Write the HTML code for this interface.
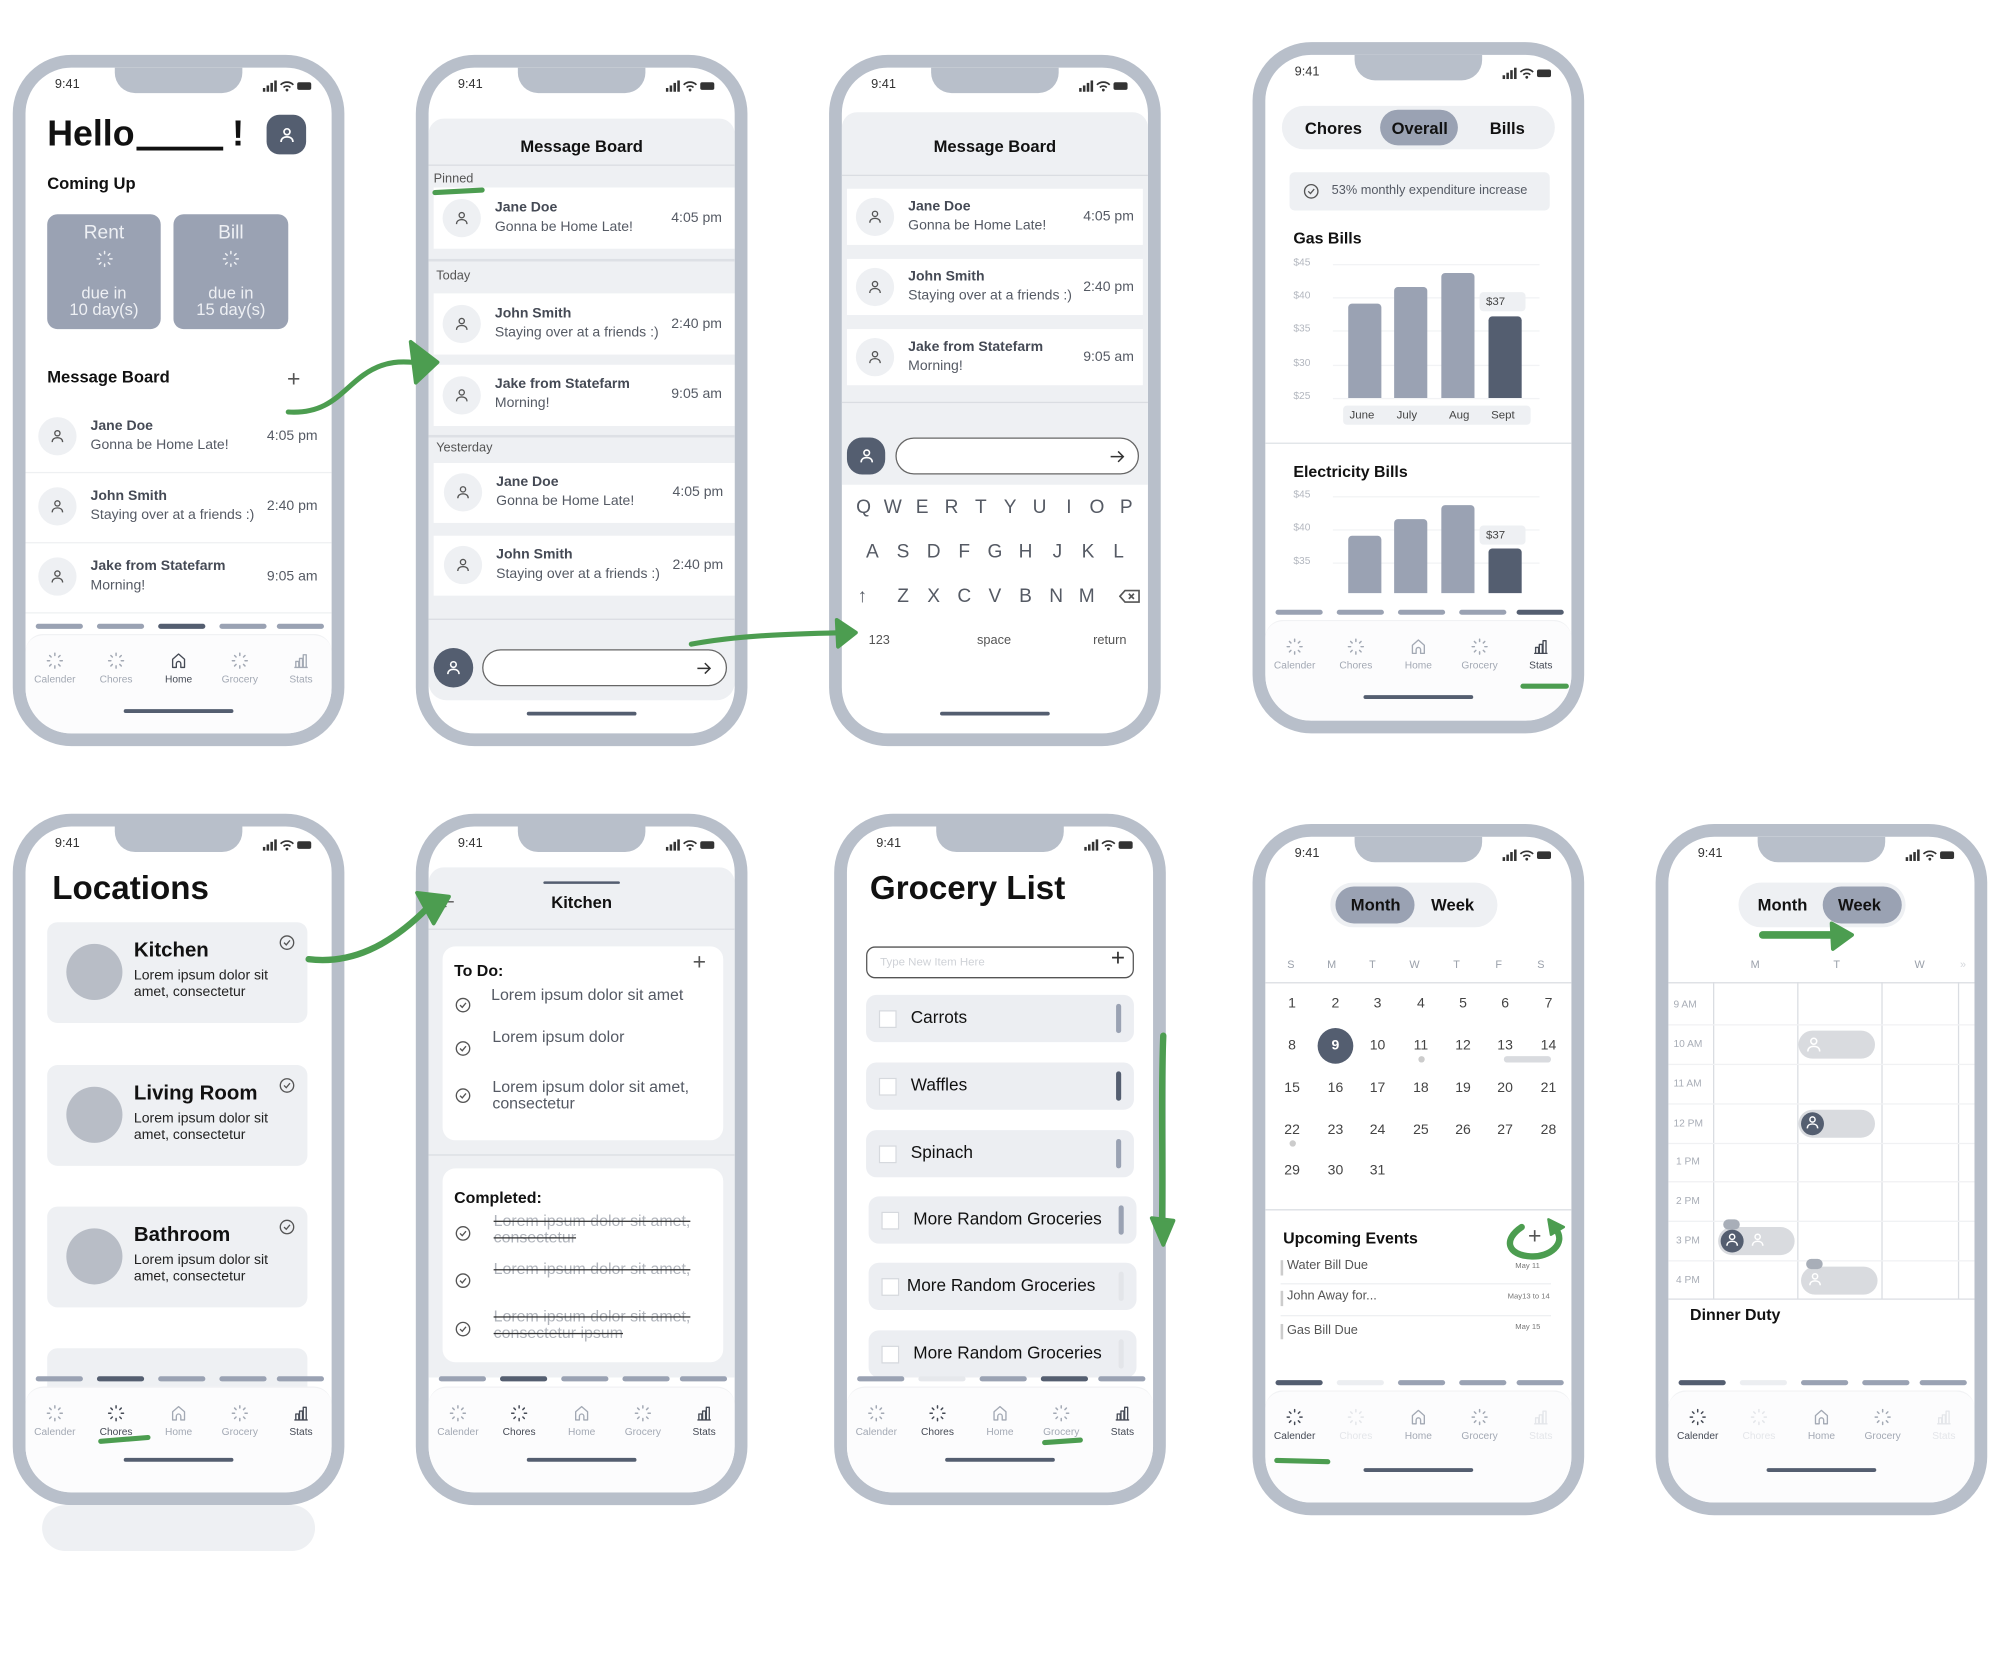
<!DOCTYPE html>
<html><head><meta charset="utf-8"><style>
html,body{margin:0;padding:0;width:2000px;height:1667px;overflow:hidden;background:#fff;font-family:"Liberation Sans",Arial,sans-serif;}
#w{position:absolute;left:0;top:0;width:1568px;height:1307px;transform:scale(1.27551);transform-origin:0 0;}
.ph{position:absolute;width:240px;height:522px;border:10px solid #b8bfca;border-radius:46px;background:#fff;overflow:hidden;}
.a{position:absolute;}
.notch{position:absolute;left:70px;top:0;width:100px;height:20px;background:#b8bfca;border-radius:0 0 16px 16px;z-index:5;}
.tm{position:absolute;left:23px;top:8px;font-size:10px;color:#333;}
.sb{position:absolute;left:186px;top:10px;}
.nav{position:absolute;left:0;width:240px;height:90px;}
.bar{position:absolute;top:0;width:37px;height:4px;border-radius:2px;background:#9aa2b3;}
.navbg{position:absolute;left:0;top:8px;width:240px;height:90px;background:#fcfcfd;border-top:1px solid #f1f2f4;border-radius:14px 14px 0 0;}
.tab{position:absolute;top:22px;width:48px;margin-left:-24px;text-align:center;font-size:8px;color:#a3a9b4;}
.tab svg{display:block;margin:0 auto 3px;}
.ind{position:absolute;left:77px;top:67px;width:86px;height:3px;border-radius:2px;background:#545e70;}
.av{position:absolute;width:30px;height:30px;border-radius:50%;background:#eef0f3;display:flex;align-items:center;justify-content:center;color:#555;}
.nm{position:absolute;font-size:11px;font-weight:bold;color:#454a55;white-space:nowrap;}
.sub{position:absolute;font-size:11px;color:#555a64;white-space:nowrap;}
.tt{position:absolute;font-size:11px;color:#555a64;white-space:nowrap;}
.card{position:absolute;background:#fff;}
.k{position:absolute;width:18px;margin-left:-9px;text-align:center;font-size:15px;color:#555a64;}
.yl{position:absolute;left:22px;font-size:8px;color:#b3b7bf;}
.gl{position:absolute;left:53px;width:162px;height:1px;background:#f2f3f5;}
.br{position:absolute;width:26px;background:#9aa2b3;border-radius:3px 3px 0 0;}
.dt{position:absolute;width:24px;margin-left:-12px;text-align:center;font-size:11px;color:#444;}
.wd{position:absolute;width:20px;margin-left:-10px;text-align:center;font-size:8.5px;color:#9aa0aa;}
.gi{position:absolute;left:15px;width:210px;height:37px;background:#eceef2;border-radius:8px;}
.gi .cb{position:absolute;left:10px;top:12px;width:12px;height:12px;background:#fff;border:1px solid #d6d9de;}
.gi .tx{position:absolute;left:35px;top:10px;font-size:13.5px;color:#111;white-space:nowrap;}
.gi .hd{position:absolute;right:10px;top:7px;width:4px;height:23px;border-radius:2px;background:#9aa2b3;}
.lc{position:absolute;left:17px;width:204px;height:79px;background:#eef0f3;border-radius:8px;}
.lc .c{position:absolute;left:15px;top:17px;width:44px;height:44px;border-radius:50%;background:#b8bdc6;}
.lc .h{position:absolute;left:68px;top:14px;font-size:16px;font-weight:bold;color:#111;}
.lc .p{position:absolute;left:68px;top:36px;font-size:11px;line-height:13px;color:#222;}
.lc .ck{position:absolute;left:181px;top:9px;}
.it{position:absolute;left:49px;font-size:12.5px;line-height:13px;color:#555a64;white-space:nowrap;}
.st{position:absolute;left:51px;font-size:12.5px;line-height:13px;color:#b0b4bb;text-decoration:line-through;text-decoration-color:#333;white-space:nowrap;}
.ic{position:absolute;left:20px;}
.seg{position:absolute;background:#eef0f3;border-radius:18px;}
.pill{position:absolute;background:#9aa2b3;border-radius:16px;}
.sl{position:absolute;font-size:13px;font-weight:bold;color:#111;}
.tl{position:absolute;left:4px;font-size:8px;color:#a8adb6;}
.ev{position:absolute;border-radius:11px;background:#d9dbdf;height:22px;width:60px;}
</style></head><body><div id="w">

<!-- ============ P1 ============ -->
<div class="ph" style="left:10px;top:43px;">
 <div class="notch"></div><div class="tm">9:41</div>
 <svg class="sb" width="40" height="9" viewBox="0 0 40 9" fill="#333"><rect x="0" y="6" width="2" height="3"/><rect x="3" y="4" width="2" height="5"/><rect x="6" y="2" width="2" height="7"/><rect x="9" y="0" width="2" height="9"/><path d="M14 3.5a7 7 0 0 1 10 0M16.3 5.6a3.8 3.8 0 0 1 5.4 0" stroke="#333" fill="none" stroke-width="1.3"/><circle cx="19" cy="7.6" r="1.1"/><rect x="27" y="1.5" width="11" height="6" rx="1.5"/></svg>
 <div class="a" style="left:17px;top:36px;font-size:28px;font-weight:bold;color:#111;">Hello</div>
 <div class="a" style="left:87px;top:62px;width:68px;height:3px;background:#111;"></div>
 <div class="a" style="left:162px;top:36px;font-size:28px;font-weight:bold;color:#111;">!</div>
 <div class="a" style="left:189px;top:37px;width:31px;height:31px;border-radius:10px;background:#545e70;display:flex;align-items:center;justify-content:center;"><svg width="16" height="16" viewBox="0 0 24 24" fill="none" stroke="#fff" stroke-width="2"><circle cx="12" cy="8" r="3.5"/><path d="M5 20c0-4 3-6 7-6s7 2 7 6"/></svg></div>
 <div class="a" style="left:17px;top:83px;font-size:13px;font-weight:bold;color:#111;">Coming Up</div>
 <div class="a" style="left:17px;top:115px;width:89px;height:90px;background:#9aa2b3;border-radius:8px;color:#eef0f4;text-align:center;">
  <div style="font-size:15px;margin-top:6px;">Rent</div>
  <svg width="14" height="14" viewBox="0 0 24 24" fill="none" stroke="#eef0f4" stroke-width="2" stroke-linecap="round" style="margin-top:5px"><path d="M12 2v3M12 19v3M2 12h3M19 12h3M5 5l2 2M17 17l2 2M5 19l2-2M17 7l2-2"/></svg>
  <div style="font-size:13px;line-height:13px;margin-top:8px;">due in<br>10 day(s)</div></div>
 <div class="a" style="left:116px;top:115px;width:90px;height:90px;background:#9aa2b3;border-radius:8px;color:#eef0f4;text-align:center;">
  <div style="font-size:15px;margin-top:6px;">Bill</div>
  <svg width="14" height="14" viewBox="0 0 24 24" fill="none" stroke="#eef0f4" stroke-width="2" stroke-linecap="round" style="margin-top:5px"><path d="M12 2v3M12 19v3M2 12h3M19 12h3M5 5l2 2M17 17l2 2M5 19l2-2M17 7l2-2"/></svg>
  <div style="font-size:13px;line-height:13px;margin-top:8px;">due in<br>15 day(s)</div></div>
 <div class="a" style="left:17px;top:235px;font-size:13px;font-weight:bold;color:#111;">Message Board</div>
 <div class="a" style="left:205px;top:236px;font-size:18px;color:#555;line-height:16px;">+</div>
 <div class="av" style="left:10px;top:274px;"><svg width="14" height="14" viewBox="0 0 24 24" fill="none" stroke="#555" stroke-width="1.8"><circle cx="12" cy="8" r="3.5"/><path d="M5 20c0-4 3-6 7-6s7 2 7 6"/></svg></div>
 <div class="nm" style="left:51px;top:275px;">Jane Doe</div><div class="sub" style="left:51px;top:290px;">Gonna be Home Late!</div><div class="tt" style="right:11px;top:283px;">4:05 pm</div>
 <div class="a" style="left:0;top:317px;width:240px;height:1px;background:#eef0f2;"></div>
 <div class="av" style="left:10px;top:329px;"><svg width="14" height="14" viewBox="0 0 24 24" fill="none" stroke="#555" stroke-width="1.8"><circle cx="12" cy="8" r="3.5"/><path d="M5 20c0-4 3-6 7-6s7 2 7 6"/></svg></div>
 <div class="nm" style="left:51px;top:330px;">John Smith</div><div class="sub" style="left:51px;top:345px;">Staying over at a friends :)</div><div class="tt" style="right:11px;top:338px;">2:40 pm</div>
 <div class="a" style="left:0;top:372px;width:240px;height:1px;background:#eef0f2;"></div>
 <div class="av" style="left:10px;top:384px;"><svg width="14" height="14" viewBox="0 0 24 24" fill="none" stroke="#555" stroke-width="1.8"><circle cx="12" cy="8" r="3.5"/><path d="M5 20c0-4 3-6 7-6s7 2 7 6"/></svg></div>
 <div class="nm" style="left:51px;top:385px;">Jake from Statefarm</div><div class="sub" style="left:51px;top:400px;">Morning!</div><div class="tt" style="right:11px;top:393px;">9:05 am</div>
 <div class="a" style="left:0;top:427px;width:240px;height:1px;background:#eef0f2;"></div>
 <div class="nav" style="top:436px;">
  <div class="navbg"></div>
  <div class="bar" style="left:8px"></div><div class="bar" style="left:56px"></div><div class="bar" style="left:104px;background:#545e70"></div><div class="bar" style="left:152px"></div><div class="bar" style="left:197px"></div>
  <div class="tab" style="left:23px"><svg width="14" height="14" viewBox="0 0 24 24" fill="none" stroke="currentColor" stroke-width="2" stroke-linecap="round"><path d="M12 2v3M12 19v3M2 12h3M19 12h3M5 5l2 2M17 17l2 2M5 19l2-2M17 7l2-2"/></svg>Calender</div>
  <div class="tab" style="left:71px"><svg width="14" height="14" viewBox="0 0 24 24" fill="none" stroke="currentColor" stroke-width="2" stroke-linecap="round"><path d="M12 2v3M12 19v3M2 12h3M19 12h3M5 5l2 2M17 17l2 2M5 19l2-2M17 7l2-2"/></svg>Chores</div>
  <div class="tab" style="left:120px;color:#454a55"><svg width="14" height="14" viewBox="0 0 24 24" fill="none" stroke="currentColor" stroke-width="1.8" stroke-linejoin="round"><path d="M4 21V10l8-7 8 7v11h-5v-5a3 3 0 0 0-6 0v5z"/></svg>Home</div>
  <div class="tab" style="left:168px"><svg width="14" height="14" viewBox="0 0 24 24" fill="none" stroke="currentColor" stroke-width="2" stroke-linecap="round"><path d="M12 2v3M12 19v3M2 12h3M19 12h3M5 5l2 2M17 17l2 2M5 19l2-2M17 7l2-2"/></svg>Grocery</div>
  <div class="tab" style="left:216px"><svg width="14" height="14" viewBox="0 0 24 24" fill="none" stroke="currentColor" stroke-width="1.8" stroke-linejoin="round"><path d="M3 21h18M5 21v-8h4v8M10 21V9h4v12M15 21V4h4v17"/></svg>Stats</div>
  <div class="ind"></div>
 </div>
</div>

<!-- ============ P2 ============ -->
<div class="ph" style="left:326px;top:43px;">
 <div class="notch"></div><div class="tm">9:41</div>
 <svg class="sb" width="40" height="9" viewBox="0 0 40 9" fill="#333"><rect x="0" y="6" width="2" height="3"/><rect x="3" y="4" width="2" height="5"/><rect x="6" y="2" width="2" height="7"/><rect x="9" y="0" width="2" height="9"/><path d="M14 3.5a7 7 0 0 1 10 0M16.3 5.6a3.8 3.8 0 0 1 5.4 0" stroke="#333" fill="none" stroke-width="1.3"/><circle cx="19" cy="7.6" r="1.1"/><rect x="27" y="1.5" width="11" height="6" rx="1.5"/></svg>
 <div class="a" style="left:0;top:40px;width:240px;height:456px;background:#eef0f3;border-radius:12px 12px 14px 14px;"></div>
 <div class="a" style="left:0;top:54px;width:240px;text-align:center;font-size:13px;font-weight:bold;color:#111;">Message Board</div>
 <div class="a" style="left:0;top:76px;width:240px;height:1px;background:#dadde2;"></div>
 <div class="a" style="left:4px;top:82px;font-size:10px;color:#555;">Pinned</div>
 <div class="card" style="left:4px;top:94px;width:236px;height:48px;"></div>
 <div class="a" style="left:0;top:150px;width:240px;height:2px;background:#dde0e5;"></div>
 <div class="a" style="left:6px;top:158px;font-size:10px;color:#555;">Today</div>
 <div class="card" style="left:4px;top:177px;width:236px;height:48px;"></div>
 <div class="card" style="left:4px;top:233px;width:236px;height:48px;"></div>
 <div class="a" style="left:0;top:288px;width:240px;height:2px;background:#dde0e5;"></div>
 <div class="a" style="left:6px;top:293px;font-size:10px;color:#555;">Yesterday</div>
 <div class="card" style="left:4px;top:310px;width:236px;height:47px;"></div>
 <div class="card" style="left:4px;top:367px;width:236px;height:47px;"></div>
 <div class="a" style="left:0;top:432px;width:240px;height:1px;background:#dadde2;"></div>
 <div class="av" style="left:11px;top:103px;"><svg width="14" height="14" viewBox="0 0 24 24" fill="none" stroke="#555" stroke-width="1.8"><circle cx="12" cy="8" r="3.5"/><path d="M5 20c0-4 3-6 7-6s7 2 7 6"/></svg></div>
 <div class="nm" style="left:52px;top:104px;">Jane Doe</div><div class="sub" style="left:52px;top:119px;">Gonna be Home Late!</div><div class="tt" style="right:10px;top:112px;">4:05 pm</div>
 <div class="av" style="left:11px;top:186px;"><svg width="14" height="14" viewBox="0 0 24 24" fill="none" stroke="#555" stroke-width="1.8"><circle cx="12" cy="8" r="3.5"/><path d="M5 20c0-4 3-6 7-6s7 2 7 6"/></svg></div>
 <div class="nm" style="left:52px;top:187px;">John Smith</div><div class="sub" style="left:52px;top:202px;">Staying over at a friends :)</div><div class="tt" style="right:10px;top:195px;">2:40 pm</div>
 <div class="av" style="left:11px;top:242px;"><svg width="14" height="14" viewBox="0 0 24 24" fill="none" stroke="#555" stroke-width="1.8"><circle cx="12" cy="8" r="3.5"/><path d="M5 20c0-4 3-6 7-6s7 2 7 6"/></svg></div>
 <div class="nm" style="left:52px;top:242px;">Jake from Statefarm</div><div class="sub" style="left:52px;top:257px;">Morning!</div><div class="tt" style="right:10px;top:250px;">9:05 am</div>
 <div class="av" style="left:12px;top:318px;"><svg width="14" height="14" viewBox="0 0 24 24" fill="none" stroke="#555" stroke-width="1.8"><circle cx="12" cy="8" r="3.5"/><path d="M5 20c0-4 3-6 7-6s7 2 7 6"/></svg></div>
 <div class="nm" style="left:53px;top:319px;">Jane Doe</div><div class="sub" style="left:53px;top:334px;">Gonna be Home Late!</div><div class="tt" style="right:9px;top:327px;">4:05 pm</div>
 <div class="av" style="left:12px;top:375px;"><svg width="14" height="14" viewBox="0 0 24 24" fill="none" stroke="#555" stroke-width="1.8"><circle cx="12" cy="8" r="3.5"/><path d="M5 20c0-4 3-6 7-6s7 2 7 6"/></svg></div>
 <div class="nm" style="left:53px;top:376px;">John Smith</div><div class="sub" style="left:53px;top:391px;">Staying over at a friends :)</div><div class="tt" style="right:9px;top:384px;">2:40 pm</div>
 <div class="a" style="left:4px;top:455px;width:31px;height:31px;border-radius:50%;background:#545e70;display:flex;align-items:center;justify-content:center;"><svg width="15" height="15" viewBox="0 0 24 24" fill="none" stroke="#fff" stroke-width="2"><circle cx="12" cy="8" r="3.5"/><path d="M5 20c0-4 3-6 7-6s7 2 7 6"/></svg></div>
 <div class="a" style="left:42px;top:456px;width:190px;height:27px;border:1px solid #666;border-radius:15px;background:#fff;"><svg class="a" style="right:10px;top:7px" width="14" height="14" viewBox="0 0 24 24" fill="none" stroke="#333" stroke-width="2"><path d="M3 12h17M13 5l7 7-7 7"/></svg></div>
 <div class="a" style="left:77px;top:505px;width:86px;height:3px;border-radius:2px;background:#545e70;"></div>
</div>

<!-- ============ P3 ============ -->
<div class="ph" style="left:650px;top:43px;">
 <div class="notch"></div><div class="tm">9:41</div>
 <svg class="sb" width="40" height="9" viewBox="0 0 40 9" fill="#333"><rect x="0" y="6" width="2" height="3"/><rect x="3" y="4" width="2" height="5"/><rect x="6" y="2" width="2" height="7"/><rect x="9" y="0" width="2" height="9"/><path d="M14 3.5a7 7 0 0 1 10 0M16.3 5.6a3.8 3.8 0 0 1 5.4 0" stroke="#333" fill="none" stroke-width="1.3"/><circle cx="19" cy="7.6" r="1.1"/><rect x="27" y="1.5" width="11" height="6" rx="1.5"/></svg>
 <div class="a" style="left:0;top:35px;width:240px;height:292px;background:#eef0f3;border-radius:12px 12px 0 0;"></div>
 <div class="a" style="left:0;top:54px;width:240px;text-align:center;font-size:13px;font-weight:bold;color:#111;">Message Board</div>
 <div class="a" style="left:0;top:84px;width:240px;height:1px;background:#dadde2;"></div>
 <div class="card" style="left:4px;top:95px;width:232px;height:44px;"></div>
 <div class="card" style="left:4px;top:150px;width:232px;height:44px;"></div>
 <div class="card" style="left:4px;top:205px;width:232px;height:44px;"></div>
 <div class="a" style="left:0;top:262px;width:240px;height:1px;background:#dadde2;"></div>
 <div class="av" style="left:11px;top:102px;"><svg width="14" height="14" viewBox="0 0 24 24" fill="none" stroke="#555" stroke-width="1.8"><circle cx="12" cy="8" r="3.5"/><path d="M5 20c0-4 3-6 7-6s7 2 7 6"/></svg></div>
 <div class="nm" style="left:52px;top:103px;">Jane Doe</div><div class="sub" style="left:52px;top:118px;">Gonna be Home Late!</div><div class="tt" style="right:11px;top:111px;">4:05 pm</div>
 <div class="av" style="left:11px;top:157px;"><svg width="14" height="14" viewBox="0 0 24 24" fill="none" stroke="#555" stroke-width="1.8"><circle cx="12" cy="8" r="3.5"/><path d="M5 20c0-4 3-6 7-6s7 2 7 6"/></svg></div>
 <div class="nm" style="left:52px;top:158px;">John Smith</div><div class="sub" style="left:52px;top:173px;">Staying over at a friends :)</div><div class="tt" style="right:11px;top:166px;">2:40 pm</div>
 <div class="av" style="left:11px;top:212px;"><svg width="14" height="14" viewBox="0 0 24 24" fill="none" stroke="#555" stroke-width="1.8"><circle cx="12" cy="8" r="3.5"/><path d="M5 20c0-4 3-6 7-6s7 2 7 6"/></svg></div>
 <div class="nm" style="left:52px;top:213px;">Jake from Statefarm</div><div class="sub" style="left:52px;top:228px;">Morning!</div><div class="tt" style="right:11px;top:221px;">9:05 am</div>
 <div class="a" style="left:4px;top:290px;width:30px;height:29px;border-radius:12px;background:#545e70;display:flex;align-items:center;justify-content:center;"><svg width="15" height="15" viewBox="0 0 24 24" fill="none" stroke="#fff" stroke-width="2"><circle cx="12" cy="8" r="3.5"/><path d="M5 20c0-4 3-6 7-6s7 2 7 6"/></svg></div>
 <div class="a" style="left:42px;top:290px;width:189px;height:27px;border:1px solid #666;border-radius:15px;background:#fff;"><svg class="a" style="right:9px;top:7px" width="14" height="14" viewBox="0 0 24 24" fill="none" stroke="#333" stroke-width="2"><path d="M3 12h17M13 5l7 7-7 7"/></svg></div>
 <div class="k" style="left:17px;top:336px">Q</div><div class="k" style="left:40px;top:336px">W</div><div class="k" style="left:63px;top:336px">E</div><div class="k" style="left:86px;top:336px">R</div><div class="k" style="left:109px;top:336px">T</div><div class="k" style="left:132px;top:336px">Y</div><div class="k" style="left:155px;top:336px">U</div><div class="k" style="left:178px;top:336px">I</div><div class="k" style="left:200px;top:336px">O</div><div class="k" style="left:223px;top:336px">P</div>
 <div class="k" style="left:24px;top:371px">A</div><div class="k" style="left:48px;top:371px">S</div><div class="k" style="left:72px;top:371px">D</div><div class="k" style="left:96px;top:371px">F</div><div class="k" style="left:120px;top:371px">G</div><div class="k" style="left:144px;top:371px">H</div><div class="k" style="left:169px;top:371px">J</div><div class="k" style="left:193px;top:371px">K</div><div class="k" style="left:217px;top:371px">L</div>
 <div class="k" style="left:16px;top:406px">↑</div><div class="k" style="left:48px;top:406px">Z</div><div class="k" style="left:72px;top:406px">X</div><div class="k" style="left:96px;top:406px">C</div><div class="k" style="left:120px;top:406px">V</div><div class="k" style="left:144px;top:406px">B</div><div class="k" style="left:168px;top:406px">N</div><div class="k" style="left:192px;top:406px">M</div>
 <svg class="a" style="left:217px;top:409px" width="17" height="11" viewBox="0 0 17 11" fill="none" stroke="#555" stroke-width="1.3"><path d="M5 1h11v9H5L1 5.5z M8 3.5l4 4M12 3.5l-4 4"/></svg>
 <div class="a" style="left:21px;top:444px;font-size:10px;color:#555;">123</div>
 <div class="a" style="left:106px;top:444px;font-size:10px;color:#555;">space</div>
 <div class="a" style="left:197px;top:444px;font-size:10px;color:#555;">return</div>
 <div class="a" style="left:77px;top:505px;width:86px;height:3px;border-radius:2px;background:#545e70;"></div>
</div>

<!-- ============ P4 ============ -->
<div class="ph" style="left:982px;top:33px;">
 <div class="notch"></div><div class="tm">9:41</div>
 <svg class="sb" width="40" height="9" viewBox="0 0 40 9" fill="#333"><rect x="0" y="6" width="2" height="3"/><rect x="3" y="4" width="2" height="5"/><rect x="6" y="2" width="2" height="7"/><rect x="9" y="0" width="2" height="9"/><path d="M14 3.5a7 7 0 0 1 10 0M16.3 5.6a3.8 3.8 0 0 1 5.4 0" stroke="#333" fill="none" stroke-width="1.3"/><circle cx="19" cy="7.6" r="1.1"/><rect x="27" y="1.5" width="11" height="6" rx="1.5"/></svg>
 <div class="seg" style="left:13px;top:40px;width:214px;height:34px;"></div>
 <div class="pill" style="left:90px;top:43px;width:61px;height:28px;"></div>
 <div class="sl" style="left:31px;top:50px;">Chores</div>
 <div class="sl" style="left:99px;top:50px;">Overall</div>
 <div class="sl" style="left:176px;top:50px;">Bills</div>
 <div class="a" style="left:19px;top:92px;width:204px;height:30px;background:#eef0f3;border-radius:4px;"></div>
 <svg class="a" style="left:29px;top:100px" width="14" height="14" viewBox="0 0 24 24" fill="none" stroke="#555" stroke-width="1.8"><circle cx="12" cy="12" r="9"/><path d="M8 12l3 3 5-6"/></svg>
 <div class="a" style="left:52px;top:101px;font-size:10px;color:#555a64;">53% monthly expenditure increase</div>
 <div class="a" style="left:22px;top:137px;font-size:12.5px;font-weight:bold;color:#111;">Gas Bills</div>
 <div class="yl" style="top:158px">$45</div><div class="yl" style="top:184px">$40</div><div class="yl" style="top:210px">$35</div><div class="yl" style="top:237px">$30</div><div class="yl" style="top:263px">$25</div>
 <div class="gl" style="top:164px"></div><div class="gl" style="top:190px"></div><div class="gl" style="top:216px"></div><div class="gl" style="top:243px"></div><div class="gl" style="top:269px"></div>
 <div class="br" style="left:65px;top:195px;height:74px"></div><div class="br" style="left:101px;top:182px;height:87px"></div><div class="br" style="left:138px;top:171px;height:98px"></div><div class="br" style="left:175px;top:205px;height:64px;background:#545e70"></div>
 <div class="a" style="left:168px;top:186px;width:36px;height:15px;background:#eef0f3;border-radius:3px;font-size:9px;color:#444;line-height:15px;padding-left:5px;box-sizing:border-box;">$37</div>
 <div class="a" style="left:61px;top:275px;width:147px;height:15px;background:#eef0f3;border-radius:3px;"></div>
 <div class="a" style="left:66px;top:277px;font-size:9px;color:#444;">June</div><div class="a" style="left:103px;top:277px;font-size:9px;color:#444;">July</div><div class="a" style="left:144px;top:277px;font-size:9px;color:#444;">Aug</div><div class="a" style="left:177px;top:277px;font-size:9px;color:#444;">Sept</div>
 <div class="a" style="left:0;top:304px;width:240px;height:1px;background:#dfe2e6;"></div>
 <div class="a" style="left:22px;top:320px;font-size:12.5px;font-weight:bold;color:#111;">Electricity Bills</div>
 <div class="yl" style="top:340px">$45</div><div class="yl" style="top:366px">$40</div><div class="yl" style="top:392px">$35</div>
 <div class="gl" style="top:346px"></div><div class="gl" style="top:372px"></div><div class="gl" style="top:398px"></div>
 <div class="br" style="left:65px;top:377px;height:45px"></div><div class="br" style="left:101px;top:364px;height:58px"></div><div class="br" style="left:138px;top:353px;height:69px"></div><div class="br" style="left:175px;top:387px;height:35px;background:#545e70"></div>
 <div class="a" style="left:168px;top:369px;width:36px;height:15px;background:#eef0f3;border-radius:3px;font-size:9px;color:#444;line-height:15px;padding-left:5px;box-sizing:border-box;">$37</div>
 <div class="nav" style="top:435px;">
  <div class="navbg"></div>
  <div class="bar" style="left:8px"></div><div class="bar" style="left:56px"></div><div class="bar" style="left:104px"></div><div class="bar" style="left:152px"></div><div class="bar" style="left:197px;background:#545e70"></div>
  <div class="tab" style="left:23px"><svg width="14" height="14" viewBox="0 0 24 24" fill="none" stroke="currentColor" stroke-width="2" stroke-linecap="round"><path d="M12 2v3M12 19v3M2 12h3M19 12h3M5 5l2 2M17 17l2 2M5 19l2-2M17 7l2-2"/></svg>Calender</div>
  <div class="tab" style="left:71px"><svg width="14" height="14" viewBox="0 0 24 24" fill="none" stroke="currentColor" stroke-width="2" stroke-linecap="round"><path d="M12 2v3M12 19v3M2 12h3M19 12h3M5 5l2 2M17 17l2 2M5 19l2-2M17 7l2-2"/></svg>Chores</div>
  <div class="tab" style="left:120px"><svg width="14" height="14" viewBox="0 0 24 24" fill="none" stroke="currentColor" stroke-width="1.8" stroke-linejoin="round"><path d="M4 21V10l8-7 8 7v11h-5v-5a3 3 0 0 0-6 0v5z"/></svg>Home</div>
  <div class="tab" style="left:168px"><svg width="14" height="14" viewBox="0 0 24 24" fill="none" stroke="currentColor" stroke-width="2" stroke-linecap="round"><path d="M12 2v3M12 19v3M2 12h3M19 12h3M5 5l2 2M17 17l2 2M5 19l2-2M17 7l2-2"/></svg>Grocery</div>
  <div class="tab" style="left:216px;color:#454a55"><svg width="14" height="14" viewBox="0 0 24 24" fill="none" stroke="currentColor" stroke-width="1.8" stroke-linejoin="round"><path d="M3 21h18M5 21v-8h4v8M10 21V9h4v12M15 21V4h4v17"/></svg>Stats</div>
  <div class="ind"></div>
 </div>
</div>

<!-- ============ P5 ============ -->
<div class="ph" style="left:10px;top:638px;">
 <div class="notch"></div><div class="tm">9:41</div>
 <svg class="sb" width="40" height="9" viewBox="0 0 40 9" fill="#333"><rect x="0" y="6" width="2" height="3"/><rect x="3" y="4" width="2" height="5"/><rect x="6" y="2" width="2" height="7"/><rect x="9" y="0" width="2" height="9"/><path d="M14 3.5a7 7 0 0 1 10 0M16.3 5.6a3.8 3.8 0 0 1 5.4 0" stroke="#333" fill="none" stroke-width="1.3"/><circle cx="19" cy="7.6" r="1.1"/><rect x="27" y="1.5" width="11" height="6" rx="1.5"/></svg>
 <div class="a" style="left:21px;top:33px;font-size:26px;font-weight:bold;color:#111;">Locations</div>
 <div class="lc" style="top:75px"><div class="c"></div><div class="h">Kitchen</div><div class="p">Lorem ipsum dolor sit<br>amet, consectetur</div><svg class="ck" width="14" height="14" viewBox="0 0 24 24" fill="none" stroke="#555" stroke-width="1.8"><circle cx="12" cy="12" r="9"/><path d="M8 12l3 3 5-6"/></svg></div>
 <div class="lc" style="top:187px"><div class="c"></div><div class="h">Living Room</div><div class="p">Lorem ipsum dolor sit<br>amet, consectetur</div><svg class="ck" width="14" height="14" viewBox="0 0 24 24" fill="none" stroke="#555" stroke-width="1.8"><circle cx="12" cy="12" r="9"/><path d="M8 12l3 3 5-6"/></svg></div>
 <div class="lc" style="top:298px"><div class="c"></div><div class="h">Bathroom</div><div class="p">Lorem ipsum dolor sit<br>amet, consectetur</div><svg class="ck" width="14" height="14" viewBox="0 0 24 24" fill="none" stroke="#555" stroke-width="1.8"><circle cx="12" cy="12" r="9"/><path d="M8 12l3 3 5-6"/></svg></div>
 <div class="lc" style="top:409px"></div>
 <div class="nav" style="top:431px;">
  <div class="navbg"></div>
  <div class="bar" style="left:8px"></div><div class="bar" style="left:56px;background:#545e70"></div><div class="bar" style="left:104px"></div><div class="bar" style="left:152px"></div><div class="bar" style="left:197px"></div>
  <div class="tab" style="left:23px"><svg width="14" height="14" viewBox="0 0 24 24" fill="none" stroke="currentColor" stroke-width="2" stroke-linecap="round"><path d="M12 2v3M12 19v3M2 12h3M19 12h3M5 5l2 2M17 17l2 2M5 19l2-2M17 7l2-2"/></svg>Calender</div>
  <div class="tab" style="left:71px;color:#454a55"><svg width="14" height="14" viewBox="0 0 24 24" fill="none" stroke="currentColor" stroke-width="2" stroke-linecap="round"><path d="M12 2v3M12 19v3M2 12h3M19 12h3M5 5l2 2M17 17l2 2M5 19l2-2M17 7l2-2"/></svg>Chores</div>
  <div class="tab" style="left:120px"><svg width="14" height="14" viewBox="0 0 24 24" fill="none" stroke="currentColor" stroke-width="1.8" stroke-linejoin="round"><path d="M4 21V10l8-7 8 7v11h-5v-5a3 3 0 0 0-6 0v5z"/></svg>Home</div>
  <div class="tab" style="left:168px"><svg width="14" height="14" viewBox="0 0 24 24" fill="none" stroke="currentColor" stroke-width="2" stroke-linecap="round"><path d="M12 2v3M12 19v3M2 12h3M19 12h3M5 5l2 2M17 17l2 2M5 19l2-2M17 7l2-2"/></svg>Grocery</div>
  <div class="tab" style="left:216px;color:#454a55"><svg width="14" height="14" viewBox="0 0 24 24" fill="none" stroke="currentColor" stroke-width="1.8" stroke-linejoin="round"><path d="M3 21h18M5 21v-8h4v8M10 21V9h4v12M15 21V4h4v17"/></svg>Stats</div>
  <div class="ind" style="top:64px"></div>
 </div>
</div>
<div class="a" style="left:33px;top:1180px;width:214px;height:36px;border-radius:18px;background:#eef0f3;"></div>

<!-- ============ P6 ============ -->
<div class="ph" style="left:326px;top:638px;">
 <div class="notch"></div><div class="tm">9:41</div>
 <svg class="sb" width="40" height="9" viewBox="0 0 40 9" fill="#333"><rect x="0" y="6" width="2" height="3"/><rect x="3" y="4" width="2" height="5"/><rect x="6" y="2" width="2" height="7"/><rect x="9" y="0" width="2" height="9"/><path d="M14 3.5a7 7 0 0 1 10 0M16.3 5.6a3.8 3.8 0 0 1 5.4 0" stroke="#333" fill="none" stroke-width="1.3"/><circle cx="19" cy="7.6" r="1.1"/><rect x="27" y="1.5" width="11" height="6" rx="1.5"/></svg>
 <div class="a" style="left:0;top:32px;width:240px;height:400px;background:#eef0f3;border-radius:12px 12px 0 0;"></div>
 <div class="a" style="left:90px;top:43px;width:60px;height:2px;background:#545e70;border-radius:1px;"></div>
 <svg class="a" style="left:7px;top:52px" width="15" height="14" viewBox="0 0 24 24" fill="none" stroke="#555" stroke-width="1.8"><path d="M21 12H4M11 5l-7 7 7 7"/></svg>
 <div class="a" style="left:0;top:52px;width:240px;text-align:center;font-size:13px;font-weight:bold;color:#111;">Kitchen</div>
 <div class="a" style="left:0;top:80px;width:240px;height:1px;background:#dadde2;"></div>
 <div class="a" style="left:11px;top:94px;width:220px;height:152px;background:#fff;border-radius:10px;"></div>
 <div class="a" style="left:20px;top:106px;font-size:12.5px;font-weight:bold;color:#111;">To Do:</div>
 <div class="a" style="left:207px;top:96px;font-size:18px;color:#555;">+</div>
 <svg class="ic" style="top:133px" width="14" height="14" viewBox="0 0 24 24" fill="none" stroke="#555" stroke-width="1.8"><circle cx="12" cy="12" r="9"/><path d="M8 12l3 3 5-6"/></svg><div class="it" style="top:126px;">Lorem ipsum dolor sit amet</div>
 <svg class="ic" style="top:167px" width="14" height="14" viewBox="0 0 24 24" fill="none" stroke="#555" stroke-width="1.8"><circle cx="12" cy="12" r="9"/><path d="M8 12l3 3 5-6"/></svg><div class="it" style="top:159px;left:50px">Lorem ipsum dolor</div>
 <svg class="ic" style="top:204px" width="14" height="14" viewBox="0 0 24 24" fill="none" stroke="#555" stroke-width="1.8"><circle cx="12" cy="12" r="9"/><path d="M8 12l3 3 5-6"/></svg><div class="it" style="top:198px;left:50px">Lorem ipsum dolor sit amet,<br>consectetur</div>
 <div class="a" style="left:0;top:257px;width:240px;height:1px;background:#dadde2;"></div>
 <div class="a" style="left:11px;top:268px;width:220px;height:152px;background:#fff;border-radius:10px;"></div>
 <div class="a" style="left:20px;top:284px;font-size:12.5px;font-weight:bold;color:#111;">Completed:</div>
 <svg class="ic" style="top:312px" width="14" height="14" viewBox="0 0 24 24" fill="none" stroke="#555" stroke-width="1.8"><circle cx="12" cy="12" r="9"/><path d="M8 12l3 3 5-6"/></svg><div class="st" style="top:303px;">Lorem ipsum dolor sit amet,<br>consectetur</div>
 <svg class="ic" style="top:349px" width="14" height="14" viewBox="0 0 24 24" fill="none" stroke="#555" stroke-width="1.8"><circle cx="12" cy="12" r="9"/><path d="M8 12l3 3 5-6"/></svg><div class="st" style="top:341px;">Lorem ipsum dolor sit amet,</div>
 <svg class="ic" style="top:387px" width="14" height="14" viewBox="0 0 24 24" fill="none" stroke="#555" stroke-width="1.8"><circle cx="12" cy="12" r="9"/><path d="M8 12l3 3 5-6"/></svg><div class="st" style="top:378px;">Lorem ipsum dolor sit amet,<br>consectetur ipsum</div>
 <div class="nav" style="top:431px;">
  <div class="navbg"></div>
  <div class="bar" style="left:8px"></div><div class="bar" style="left:56px;background:#545e70"></div><div class="bar" style="left:104px"></div><div class="bar" style="left:152px"></div><div class="bar" style="left:197px"></div>
  <div class="tab" style="left:23px"><svg width="14" height="14" viewBox="0 0 24 24" fill="none" stroke="currentColor" stroke-width="2" stroke-linecap="round"><path d="M12 2v3M12 19v3M2 12h3M19 12h3M5 5l2 2M17 17l2 2M5 19l2-2M17 7l2-2"/></svg>Calender</div>
  <div class="tab" style="left:71px;color:#454a55"><svg width="14" height="14" viewBox="0 0 24 24" fill="none" stroke="currentColor" stroke-width="2" stroke-linecap="round"><path d="M12 2v3M12 19v3M2 12h3M19 12h3M5 5l2 2M17 17l2 2M5 19l2-2M17 7l2-2"/></svg>Chores</div>
  <div class="tab" style="left:120px"><svg width="14" height="14" viewBox="0 0 24 24" fill="none" stroke="currentColor" stroke-width="1.8" stroke-linejoin="round"><path d="M4 21V10l8-7 8 7v11h-5v-5a3 3 0 0 0-6 0v5z"/></svg>Home</div>
  <div class="tab" style="left:168px"><svg width="14" height="14" viewBox="0 0 24 24" fill="none" stroke="currentColor" stroke-width="2" stroke-linecap="round"><path d="M12 2v3M12 19v3M2 12h3M19 12h3M5 5l2 2M17 17l2 2M5 19l2-2M17 7l2-2"/></svg>Grocery</div>
  <div class="tab" style="left:216px;color:#454a55"><svg width="14" height="14" viewBox="0 0 24 24" fill="none" stroke="currentColor" stroke-width="1.8" stroke-linejoin="round"><path d="M3 21h18M5 21v-8h4v8M10 21V9h4v12M15 21V4h4v17"/></svg>Stats</div>
  <div class="ind" style="top:64px"></div>
 </div>
</div>

<!-- ============ P7 ============ -->
<div class="ph" style="left:654px;top:638px;">
 <div class="notch"></div><div class="tm">9:41</div>
 <svg class="sb" width="40" height="9" viewBox="0 0 40 9" fill="#333"><rect x="0" y="6" width="2" height="3"/><rect x="3" y="4" width="2" height="5"/><rect x="6" y="2" width="2" height="7"/><rect x="9" y="0" width="2" height="9"/><path d="M14 3.5a7 7 0 0 1 10 0M16.3 5.6a3.8 3.8 0 0 1 5.4 0" stroke="#333" fill="none" stroke-width="1.3"/><circle cx="19" cy="7.6" r="1.1"/><rect x="27" y="1.5" width="11" height="6" rx="1.5"/></svg>
 <div class="a" style="left:18px;top:33px;font-size:26px;font-weight:bold;color:#111;">Grocery List</div>
 <div class="a" style="left:15px;top:94px;width:208px;height:23px;border:1px solid #555;border-radius:7px;"><div class="a" style="left:10px;top:6px;font-size:9px;color:#cfd2d7;">Type New Item Here</div><div class="a" style="right:6px;top:-2px;font-size:19px;color:#333;">+</div></div>
 <div class="gi" style="top:132px"><div class="cb"></div><div class="tx">Carrots</div><div class="hd"></div></div>
 <div class="gi" style="top:185px"><div class="cb"></div><div class="tx">Waffles</div><div class="hd" style="background:#545e70"></div></div>
 <div class="gi" style="top:238px"><div class="cb"></div><div class="tx">Spinach</div><div class="hd"></div></div>
 <div class="gi" style="top:290px;left:17px"><div class="cb"></div><div class="tx">More Random Groceries</div><div class="hd"></div></div>
 <div class="gi" style="top:342px;left:17px"><div class="cb"></div><div class="tx" style="left:30px">More Random Groceries</div><div class="hd" style="background:#e3e5e9"></div></div>
 <div class="gi" style="top:395px;left:17px"><div class="cb"></div><div class="tx">More Random Groceries</div><div class="hd" style="background:#e3e5e9"></div></div>
 <div class="nav" style="top:431px;">
  <div class="navbg"></div>
  <div class="bar" style="left:8px"></div><div class="bar" style="left:56px;background:#e6e8ec"></div><div class="bar" style="left:104px"></div><div class="bar" style="left:152px;background:#545e70"></div><div class="bar" style="left:197px"></div>
  <div class="tab" style="left:23px"><svg width="14" height="14" viewBox="0 0 24 24" fill="none" stroke="currentColor" stroke-width="2" stroke-linecap="round"><path d="M12 2v3M12 19v3M2 12h3M19 12h3M5 5l2 2M17 17l2 2M5 19l2-2M17 7l2-2"/></svg>Calender</div>
  <div class="tab" style="left:71px;color:#454a55"><svg width="14" height="14" viewBox="0 0 24 24" fill="none" stroke="currentColor" stroke-width="2" stroke-linecap="round"><path d="M12 2v3M12 19v3M2 12h3M19 12h3M5 5l2 2M17 17l2 2M5 19l2-2M17 7l2-2"/></svg>Chores</div>
  <div class="tab" style="left:120px"><svg width="14" height="14" viewBox="0 0 24 24" fill="none" stroke="currentColor" stroke-width="1.8" stroke-linejoin="round"><path d="M4 21V10l8-7 8 7v11h-5v-5a3 3 0 0 0-6 0v5z"/></svg>Home</div>
  <div class="tab" style="left:168px"><svg width="14" height="14" viewBox="0 0 24 24" fill="none" stroke="currentColor" stroke-width="2" stroke-linecap="round"><path d="M12 2v3M12 19v3M2 12h3M19 12h3M5 5l2 2M17 17l2 2M5 19l2-2M17 7l2-2"/></svg>Grocery</div>
  <div class="tab" style="left:216px;color:#454a55"><svg width="14" height="14" viewBox="0 0 24 24" fill="none" stroke="currentColor" stroke-width="1.8" stroke-linejoin="round"><path d="M3 21h18M5 21v-8h4v8M10 21V9h4v12M15 21V4h4v17"/></svg>Stats</div>
  <div class="ind" style="top:64px"></div>
 </div>
</div>

<!-- ============ P8 ============ -->
<div class="ph" style="left:982px;top:646px;">
 <div class="notch"></div><div class="tm">9:41</div>
 <svg class="sb" width="40" height="9" viewBox="0 0 40 9" fill="#333"><rect x="0" y="6" width="2" height="3"/><rect x="3" y="4" width="2" height="5"/><rect x="6" y="2" width="2" height="7"/><rect x="9" y="0" width="2" height="9"/><path d="M14 3.5a7 7 0 0 1 10 0M16.3 5.6a3.8 3.8 0 0 1 5.4 0" stroke="#333" fill="none" stroke-width="1.3"/><circle cx="19" cy="7.6" r="1.1"/><rect x="27" y="1.5" width="11" height="6" rx="1.5"/></svg>
 <div class="seg" style="left:51px;top:36px;width:131px;height:35px;"></div>
 <div class="pill" style="left:55px;top:39px;width:62px;height:29px;"></div>
 <div class="sl" style="left:67px;top:46px;">Month</div>
 <div class="sl" style="left:130px;top:46px;">Week</div>
 <div class="wd" style="left:20px;top:95px">S</div><div class="wd" style="left:52px;top:95px">M</div><div class="wd" style="left:84px;top:95px">T</div><div class="wd" style="left:117px;top:95px">W</div><div class="wd" style="left:150px;top:95px">T</div><div class="wd" style="left:183px;top:95px">F</div><div class="wd" style="left:216px;top:95px">S</div>
 <div class="a" style="left:0;top:114px;width:240px;height:1px;background:#dadde2;"></div>
 <div class="a" style="left:41px;top:150px;width:28px;height:28px;border-radius:50%;background:#545e70;"></div>
 <div class="dt" style="left:21px;top:125px">1</div><div class="dt" style="left:55px;top:125px">2</div><div class="dt" style="left:88px;top:125px">3</div><div class="dt" style="left:122px;top:125px">4</div><div class="dt" style="left:155px;top:125px">5</div><div class="dt" style="left:188px;top:125px">6</div><div class="dt" style="left:222px;top:125px">7</div>
 <div class="dt" style="left:21px;top:158px">8</div><div class="dt" style="left:55px;top:158px;color:#fff;font-weight:bold">9</div><div class="dt" style="left:88px;top:158px">10</div><div class="dt" style="left:122px;top:158px">11</div><div class="dt" style="left:155px;top:158px">12</div><div class="dt" style="left:188px;top:158px">13</div><div class="dt" style="left:222px;top:158px">14</div>
 <div class="dt" style="left:21px;top:191px">15</div><div class="dt" style="left:55px;top:191px">16</div><div class="dt" style="left:88px;top:191px">17</div><div class="dt" style="left:122px;top:191px">18</div><div class="dt" style="left:155px;top:191px">19</div><div class="dt" style="left:188px;top:191px">20</div><div class="dt" style="left:222px;top:191px">21</div>
 <div class="dt" style="left:21px;top:224px">22</div><div class="dt" style="left:55px;top:224px">23</div><div class="dt" style="left:88px;top:224px">24</div><div class="dt" style="left:122px;top:224px">25</div><div class="dt" style="left:155px;top:224px">26</div><div class="dt" style="left:188px;top:224px">27</div><div class="dt" style="left:222px;top:224px">28</div>
 <div class="dt" style="left:21px;top:256px">29</div><div class="dt" style="left:55px;top:256px">30</div><div class="dt" style="left:88px;top:256px">31</div>
 <div class="a" style="left:120px;top:172px;width:5px;height:5px;border-radius:50%;background:#ccc;"></div>
 <div class="a" style="left:187px;top:172px;width:37px;height:5px;border-radius:3px;background:#d9dbdf;"></div>
 <div class="a" style="left:19px;top:238px;width:5px;height:5px;border-radius:50%;background:#ccc;"></div>
 <div class="a" style="left:0;top:292px;width:240px;height:1px;background:#dadde2;"></div>
 <div class="a" style="left:14px;top:308px;font-size:12.5px;font-weight:bold;color:#111;">Upcoming Events</div>
 <div class="a" style="left:206px;top:303px;font-size:18px;color:#555;">+</div>
 <div class="a" style="left:12px;top:332px;width:2px;height:12px;background:#ccc;"></div><div class="a" style="left:17px;top:331px;font-size:10px;color:#555;">Water Bill Due</div><div class="a" style="left:196px;top:334px;font-size:6px;color:#777;">May 11</div>
 <div class="a" style="left:12px;top:350px;width:212px;height:1px;background:#eef0f2;"></div>
 <div class="a" style="left:12px;top:356px;width:2px;height:12px;background:#ccc;"></div><div class="a" style="left:17px;top:355px;font-size:10px;color:#555;">John Away for...</div><div class="a" style="left:190px;top:358px;font-size:6px;color:#777;">May13 to 14</div>
 <div class="a" style="left:12px;top:375px;width:212px;height:1px;background:#eef0f2;"></div>
 <div class="a" style="left:12px;top:382px;width:2px;height:12px;background:#ccc;"></div><div class="a" style="left:17px;top:382px;font-size:10px;color:#555;">Gas Bill Due</div><div class="a" style="left:196px;top:382px;font-size:6px;color:#777;">May 15</div>
 <div class="nav" style="top:426px;">
  <div class="navbg"></div>
  <div class="bar" style="left:8px;background:#545e70"></div><div class="bar" style="left:56px;background:#eceef1"></div><div class="bar" style="left:104px"></div><div class="bar" style="left:152px"></div><div class="bar" style="left:197px"></div>
  <div class="tab" style="left:23px;color:#454a55"><svg width="14" height="14" viewBox="0 0 24 24" fill="none" stroke="currentColor" stroke-width="2" stroke-linecap="round"><path d="M12 2v3M12 19v3M2 12h3M19 12h3M5 5l2 2M17 17l2 2M5 19l2-2M17 7l2-2"/></svg>Calender</div>
  <div class="tab" style="left:71px;color:#e4e6ea"><svg width="14" height="14" viewBox="0 0 24 24" fill="none" stroke="currentColor" stroke-width="2" stroke-linecap="round"><path d="M12 2v3M12 19v3M2 12h3M19 12h3M5 5l2 2M17 17l2 2M5 19l2-2M17 7l2-2"/></svg>Chores</div>
  <div class="tab" style="left:120px"><svg width="14" height="14" viewBox="0 0 24 24" fill="none" stroke="currentColor" stroke-width="1.8" stroke-linejoin="round"><path d="M4 21V10l8-7 8 7v11h-5v-5a3 3 0 0 0-6 0v5z"/></svg>Home</div>
  <div class="tab" style="left:168px"><svg width="14" height="14" viewBox="0 0 24 24" fill="none" stroke="currentColor" stroke-width="2" stroke-linecap="round"><path d="M12 2v3M12 19v3M2 12h3M19 12h3M5 5l2 2M17 17l2 2M5 19l2-2M17 7l2-2"/></svg>Grocery</div>
  <div class="tab" style="left:216px;color:#e4e6ea"><svg width="14" height="14" viewBox="0 0 24 24" fill="none" stroke="currentColor" stroke-width="1.8" stroke-linejoin="round"><path d="M3 21h18M5 21v-8h4v8M10 21V9h4v12M15 21V4h4v17"/></svg>Stats</div>
  <div class="ind" style="top:69px"></div>
 </div>
</div>

<!-- ============ P9 ============ -->
<div class="ph" style="left:1298px;top:646px;">
 <div class="notch"></div><div class="tm">9:41</div>
 <svg class="sb" width="40" height="9" viewBox="0 0 40 9" fill="#333"><rect x="0" y="6" width="2" height="3"/><rect x="3" y="4" width="2" height="5"/><rect x="6" y="2" width="2" height="7"/><rect x="9" y="0" width="2" height="9"/><path d="M14 3.5a7 7 0 0 1 10 0M16.3 5.6a3.8 3.8 0 0 1 5.4 0" stroke="#333" fill="none" stroke-width="1.3"/><circle cx="19" cy="7.6" r="1.1"/><rect x="27" y="1.5" width="11" height="6" rx="1.5"/></svg>
 <div class="seg" style="left:55px;top:36px;width:131px;height:35px;"></div>
 <div class="pill" style="left:121px;top:39px;width:62px;height:29px;"></div>
 <div class="sl" style="left:70px;top:46px;">Month</div>
 <div class="sl" style="left:133px;top:46px;">Week</div>
 <div class="wd" style="left:68px;top:95px">M</div><div class="wd" style="left:132px;top:95px">T</div><div class="wd" style="left:197px;top:95px">W</div><div class="wd" style="left:231px;top:95px;color:#d5d8dd">»</div>
 <div class="a" style="left:0;top:114px;width:240px;height:1px;background:#dadde2;"></div>
 <div class="a" style="left:35px;top:114px;width:1px;height:248px;background:#dadde2;"></div>
 <div class="a" style="left:101px;top:114px;width:1px;height:248px;background:#dadde2;"></div>
 <div class="a" style="left:167px;top:114px;width:1px;height:248px;background:#dadde2;"></div>
 <div class="a" style="left:227px;top:114px;width:1px;height:248px;background:#dadde2;"></div>
 <div class="a" style="left:0;top:147px;width:240px;height:1px;background:#f0f1f3;"></div>
 <div class="a" style="left:0;top:178px;width:240px;height:1px;background:#f0f1f3;"></div>
 <div class="a" style="left:0;top:209px;width:240px;height:1px;background:#f0f1f3;"></div>
 <div class="a" style="left:0;top:240px;width:240px;height:1px;background:#f0f1f3;"></div>
 <div class="a" style="left:0;top:270px;width:240px;height:1px;background:#f0f1f3;"></div>
 <div class="a" style="left:0;top:301px;width:240px;height:1px;background:#f0f1f3;"></div>
 <div class="a" style="left:0;top:332px;width:240px;height:1px;background:#f0f1f3;"></div>
 <div class="a" style="left:0;top:362px;width:240px;height:1px;background:#dadde2;"></div>
 <div class="tl" style="top:127px">9 AM</div><div class="tl" style="top:158px">10 AM</div><div class="tl" style="top:189px">11 AM</div><div class="tl" style="top:220px">12 PM</div><div class="tl" style="top:250px;left:6px">1 PM</div><div class="tl" style="top:281px;left:6px">2 PM</div><div class="tl" style="top:312px;left:6px">3 PM</div><div class="tl" style="top:343px;left:6px">4 PM</div>
 <div class="ev" style="left:102px;top:152px;"><svg class="a" style="left:4px;top:3px" width="16" height="16" viewBox="0 0 24 24" fill="none" stroke="#fff" stroke-width="1.8"><circle cx="12" cy="8" r="3.5"/><path d="M5 20c0-4 3-6 7-6s7 2 7 6"/></svg></div>
 <div class="ev" style="left:102px;top:214px;"><div class="a" style="left:2px;top:2px;width:18px;height:18px;border-radius:50%;background:#545e70;"></div><svg class="a" style="left:4px;top:3px" width="14" height="14" viewBox="0 0 24 24" fill="none" stroke="#fff" stroke-width="2"><circle cx="12" cy="8" r="3.5"/><path d="M5 20c0-4 3-6 7-6s7 2 7 6"/></svg></div>
 <div class="ev" style="left:39px;top:306px;"><div class="a" style="left:2px;top:2px;width:18px;height:18px;border-radius:50%;background:#545e70;"></div><div class="a" style="left:4px;top:-6px;width:13px;height:8px;border-radius:5px;background:#a8aeb8;"></div><svg class="a" style="left:4px;top:3px" width="14" height="14" viewBox="0 0 24 24" fill="none" stroke="#fff" stroke-width="2"><circle cx="12" cy="8" r="3.5"/><path d="M5 20c0-4 3-6 7-6s7 2 7 6"/></svg><svg class="a" style="left:24px;top:3px" width="14" height="14" viewBox="0 0 24 24" fill="none" stroke="#fff" stroke-width="2"><circle cx="12" cy="8" r="3.5"/><path d="M5 20c0-4 3-6 7-6s7 2 7 6"/></svg></div>
 <div class="ev" style="left:104px;top:337px;"><div class="a" style="left:4px;top:-6px;width:13px;height:8px;border-radius:5px;background:#a8aeb8;"></div><svg class="a" style="left:4px;top:3px" width="14" height="14" viewBox="0 0 24 24" fill="none" stroke="#fff" stroke-width="2"><circle cx="12" cy="8" r="3.5"/><path d="M5 20c0-4 3-6 7-6s7 2 7 6"/></svg></div>
 <div class="a" style="left:17px;top:368px;font-size:12.5px;font-weight:bold;color:#111;">Dinner Duty</div>
 <div class="nav" style="top:426px;">
  <div class="navbg"></div>
  <div class="bar" style="left:8px;background:#545e70"></div><div class="bar" style="left:56px;background:#eceef1"></div><div class="bar" style="left:104px"></div><div class="bar" style="left:152px"></div><div class="bar" style="left:197px"></div>
  <div class="tab" style="left:23px;color:#454a55"><svg width="14" height="14" viewBox="0 0 24 24" fill="none" stroke="currentColor" stroke-width="2" stroke-linecap="round"><path d="M12 2v3M12 19v3M2 12h3M19 12h3M5 5l2 2M17 17l2 2M5 19l2-2M17 7l2-2"/></svg>Calender</div>
  <div class="tab" style="left:71px;color:#e4e6ea"><svg width="14" height="14" viewBox="0 0 24 24" fill="none" stroke="currentColor" stroke-width="2" stroke-linecap="round"><path d="M12 2v3M12 19v3M2 12h3M19 12h3M5 5l2 2M17 17l2 2M5 19l2-2M17 7l2-2"/></svg>Chores</div>
  <div class="tab" style="left:120px"><svg width="14" height="14" viewBox="0 0 24 24" fill="none" stroke="currentColor" stroke-width="1.8" stroke-linejoin="round"><path d="M4 21V10l8-7 8 7v11h-5v-5a3 3 0 0 0-6 0v5z"/></svg>Home</div>
  <div class="tab" style="left:168px"><svg width="14" height="14" viewBox="0 0 24 24" fill="none" stroke="currentColor" stroke-width="2" stroke-linecap="round"><path d="M12 2v3M12 19v3M2 12h3M19 12h3M5 5l2 2M17 17l2 2M5 19l2-2M17 7l2-2"/></svg>Grocery</div>
  <div class="tab" style="left:216px;color:#e4e6ea"><svg width="14" height="14" viewBox="0 0 24 24" fill="none" stroke="currentColor" stroke-width="1.8" stroke-linejoin="round"><path d="M3 21h18M5 21v-8h4v8M10 21V9h4v12M15 21V4h4v17"/></svg>Stats</div>
  <div class="ind" style="top:69px"></div>
 </div>
</div>

<!-- ============ green annotations ============ -->
<svg class="a" style="left:0;top:0;z-index:20" width="1568" height="1307" viewBox="0 0 1568 1307" fill="none" stroke="#4c9d50" stroke-linecap="round" stroke-linejoin="round">
 <path d="M226 323 C258 325 268 306 285 294 S315 283 333 285" stroke-width="4"/>
 <path d="M322 268 L343 284 L326 300 Z" fill="#4c9d50" stroke-width="3"/>
 <path d="M542 505 C580 498 620 497 660 496" stroke-width="4"/>
 <path d="M656 486 L671 496 L657 507 Z" fill="#4c9d50" stroke-width="3"/>
 <path d="M242 752 C275 756 305 742 335 712" stroke-width="5"/>
 <path d="M327 700 L352 703 L340 724 Z" fill="#4c9d50" stroke-width="3"/>
 <path d="M912 812 C910 860 912 910 911 960" stroke-width="5"/>
 <path d="M903 955 L920 957 L912 976 Z" fill="#4c9d50" stroke-width="3"/>
 <path d="M1382 733 L1440 733" stroke-width="6"/>
 <path d="M1436 724 L1452 733 L1437 744 Z" fill="#4c9d50" stroke-width="3"/>
 <path d="M1193 962 C1178 972 1182 984 1200 985 C1215 986 1228 975 1220 964" stroke-width="5"/>
 <path d="M1214 956 L1226 962 L1216 968 Z" fill="#4c9d50" stroke-width="2"/>
 <path d="M341 151 L378 149" stroke-width="4"/>
 <path d="M1194 538 L1228 538" stroke-width="4"/>
 <path d="M79 1130 L116 1127" stroke-width="4"/>
 <path d="M819 1131 L847 1129" stroke-width="4"/>
 <path d="M1001 1145 L1041 1146" stroke-width="4"/>
</svg>

</div></body></html>
